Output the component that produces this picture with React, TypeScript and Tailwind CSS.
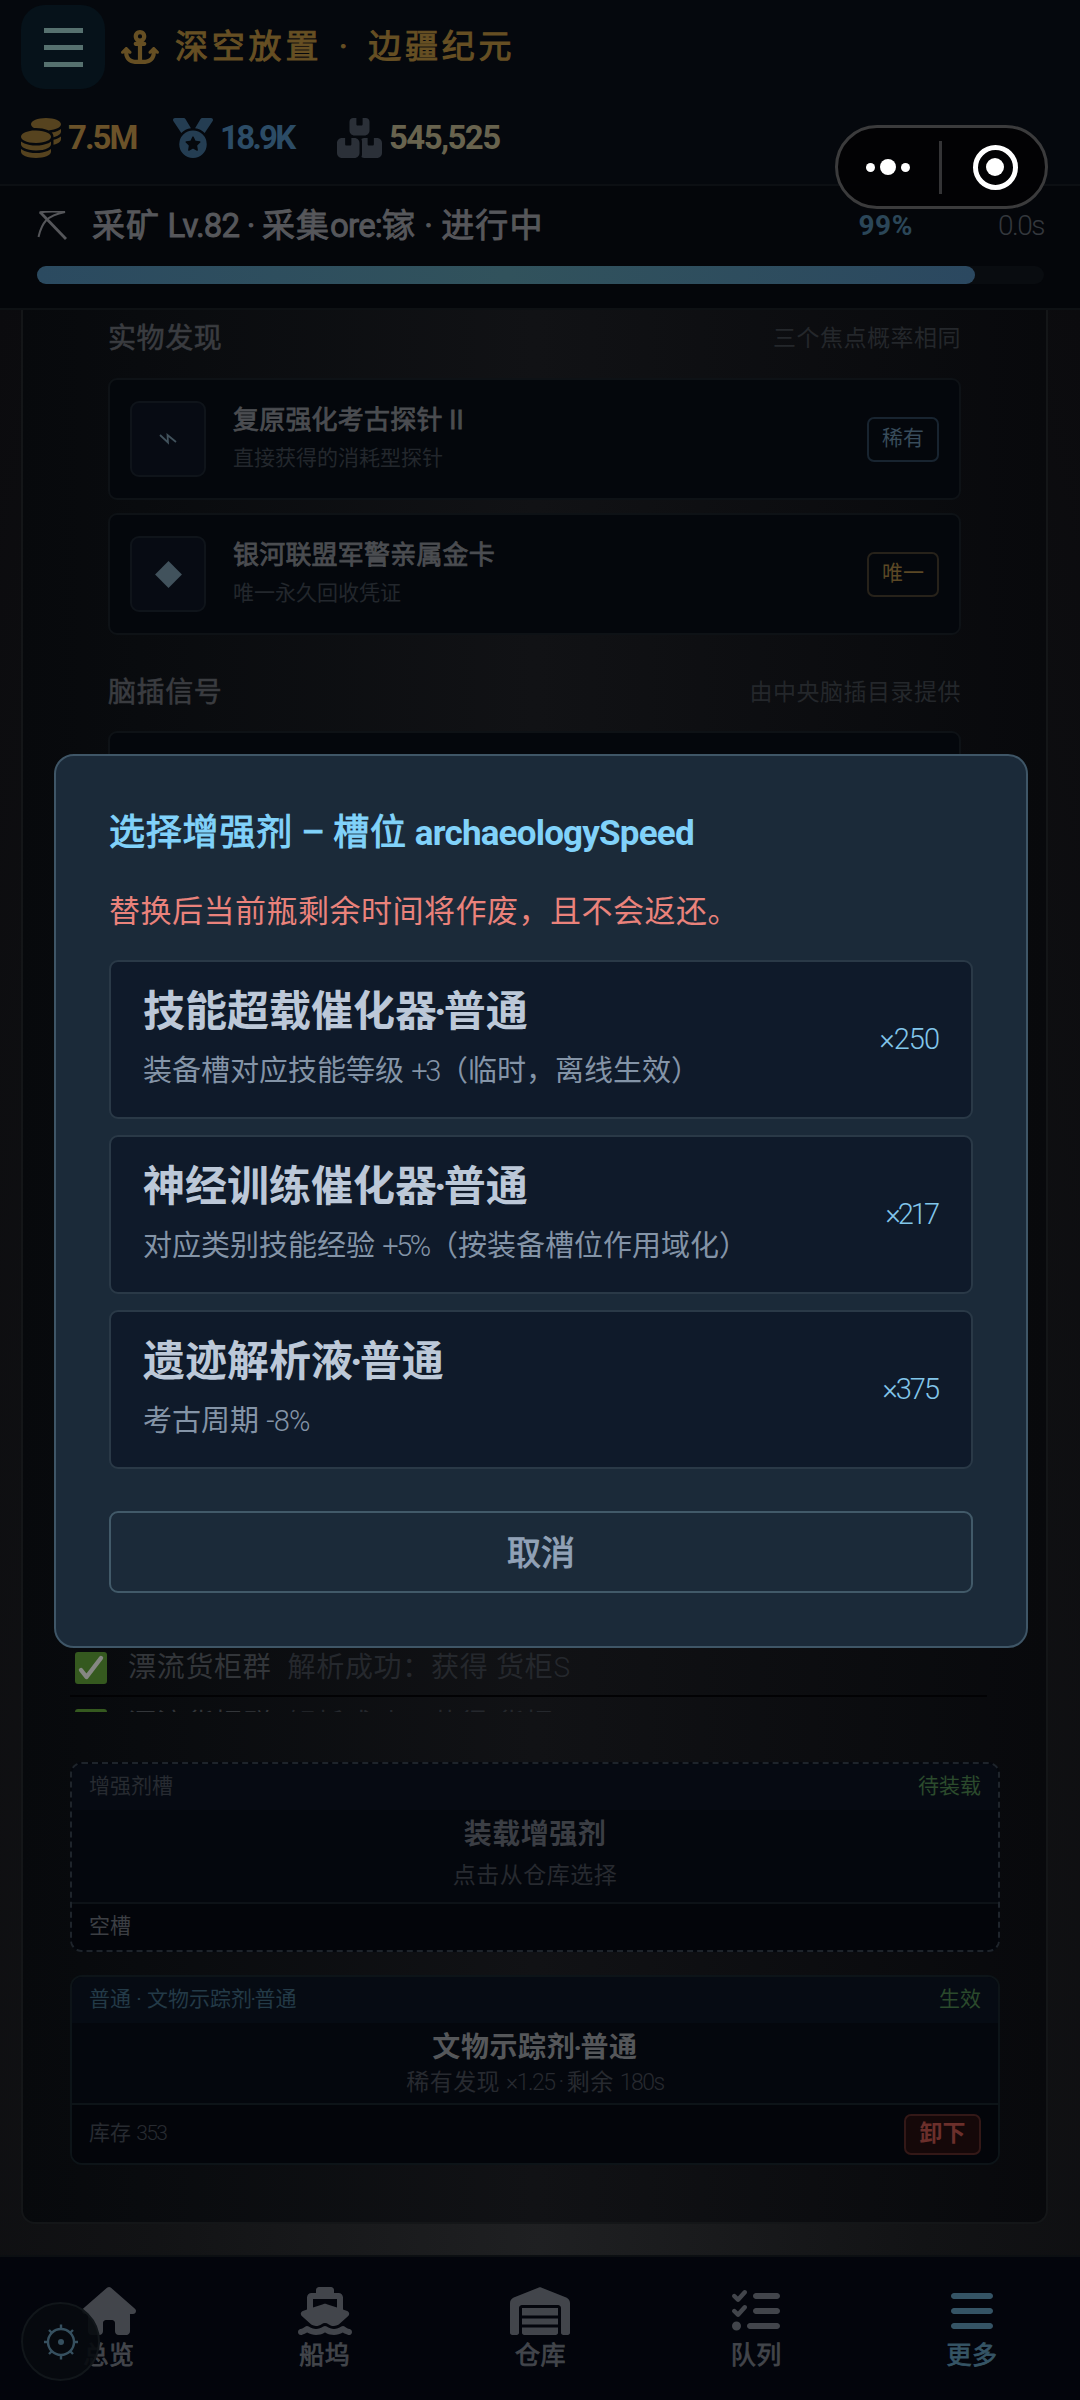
import { Fragment, type ReactNode } from "react";
import {
  FaAnchor,
  FaBars,
  FaBoxesStacked,
  FaCoins,
  FaHouse,
  FaListCheck,
  FaMedal,
  FaShip,
  FaWarehouse,
} from "react-icons/fa6";

const boosters = [
  {
    name: "技能超载催化器·普通",
    before: "装备槽对应技能等级 ",
    value: "+3",
    after: "（临时，离线生效）",
    valueClass: "tracking-[-2.4px]",
    count: "×250",
    countClass: "tracking-[-1px]",
  },
  {
    name: "神经训练催化器·普通",
    before: "对应类别技能经验 ",
    value: "+5%",
    after: "（按装备槽位作用域化）",
    valueClass: "tracking-[-2.4px]",
    count: "×217",
    countClass: "tracking-[-3px] pr-[2px]",
  },
  {
    name: "遗迹解析液·普通",
    before: "考古周期 ",
    value: "-8%",
    after: "",
    valueClass: "tracking-[-0.8px]",
    count: "×375",
    countClass: "tracking-[-2px] pr-px",
  },
];

const tabs = [
  { label: "总览", icon: <FaHouse className="h-12 w-[54px]" /> },
  { label: "船坞", icon: <FaShip className="h-12 w-[54px]" /> },
  { label: "仓库", icon: <FaWarehouse className="h-12 w-[60px]" /> },
  { label: "队列", icon: <FaListCheck className="h-12 w-12" /> },
  { label: "更多", icon: <FaBars className="h-12 w-[42px]" />, active: true },
];

function Pickaxe() {
  return (
    <svg viewBox="0 0 30 30" className="h-[30px] w-[30px]" fill="none" stroke="#55565a">
      <path d="M3 1 29 28" strokeWidth="2.8" />
      <path d="M2.500 1.500C12-.5 20 .5 28 1 20 2.500 14 4.500 9 9.500 4 15 3 20 1.500 26" strokeWidth="2" />
    </svg>
  );
}

function Probe() {
  return (
    <svg viewBox="0 0 18 12" className="h-3 w-[18px]" fill="none" stroke="#41525c" strokeWidth="1.8">
      <path d="M1 2 9 9.500 8.500 2 17 9" />
    </svg>
  );
}

function Check() {
  return (
    <svg viewBox="0 0 32 32" className="h-8 w-8 shrink-0">
      <rect width="32" height="32" rx="3" fill="#35591f" />
      <path
        d="M6 18 11.500 25 26 6"
        fill="none"
        stroke="#858783"
        strokeWidth="4.4"
        strokeLinecap="round"
        strokeLinejoin="round"
      />
    </svg>
  );
}

// Item names use a tight middle dot
function Name({ text }: { text: string }) {
  return (
    <>
      {text.split("·").map((part, i) => (
        <Fragment key={part}>
          {i > 0 && <span className="-mx-[0.07em]">·</span>}
          {part}
        </Fragment>
      ))}
    </>
  );
}

function SectionHead({ title, note }: { title: string; note: string }) {
  return (
    <div className="flex h-10 items-center justify-between">
      <h3 className="text-[28px] leading-10 tracking-[0.6px] text-[#3a3c40] [-webkit-text-stroke:0.6px]">{title}</h3>
      <span className="text-[23px] leading-10 tracking-[0.5px] text-[#24272b]">{note}</span>
    </div>
  );
}

function FindCard({
  icon,
  name,
  desc,
  badge,
  gold,
}: {
  icon: ReactNode;
  name: string;
  desc: string;
  badge: string;
  gold?: boolean;
}) {
  return (
    <div className="flex h-[122px] items-center rounded-[9px] border-2 border-[#0e1216] bg-[#04070c] px-5">
      <div className="flex h-[76px] w-[76px] items-center justify-center rounded-[9px] border-2 border-[#0f141a] bg-[#070b13]">
        {icon}
      </div>
      <div className="-mt-[2px] ml-[27px] flex-1">
        <div className="text-[26px] leading-9 tracking-[0.2px] text-[#4b4d51] [-webkit-text-stroke:0.8px]">{name}</div>
        <div className="mt-1 text-[21px] leading-8 text-[#23272d]">{desc}</div>
      </div>
      <div
        className={
          gold
            ? "flex h-[45px] w-[72px] items-center justify-center rounded-[7px] border-2 border-[#27221a] text-[21px] text-[#5b4825]"
            : "flex h-[45px] w-[72px] items-center justify-center rounded-[7px] border-2 border-[#182430] text-[21px] text-[#384c5b]"
        }
      >
        {badge}
      </div>
    </div>
  );
}

function LogRow() {
  return (
    <div className="flex h-[57px] shrink-0 items-center border-b-2 border-[#020204] pl-[5px] text-[28px] leading-10 tracking-[0.7px]">
      <Check />
      <span className="ml-[21px] text-[#33363a]">漂流货柜群</span>
      <span className="ml-4 text-[#25282d]">
        解析成功：获得 货柜<span className="font-light">S</span>
      </span>
    </div>
  );
}

export default function App() {
  return (
    <div className="relative flex h-[2400px] w-[1080px] flex-col overflow-hidden bg-[#04060b] font-['Roboto','Noto_Sans_CJK_SC',sans-serif]">
      {/* Top bar */}
      <header className="h-[310px] shrink-0 border-b-2 border-[#0e1114] bg-[#04060a]">
        <div className="h-[186px] border-b-2 border-[#0c0f13] bg-[#05080d] px-[21px] pt-[5px]">
          <div className="flex h-[84px] items-center">
            <div className="flex h-[84px] w-[84px] flex-col items-center justify-center gap-3 rounded-3xl bg-[#06121a]">
              <div className="h-[5px] w-[39px] bg-[#56716f]" />
              <div className="h-[5px] w-[39px] bg-[#56716f]" />
              <div className="h-[5px] w-[39px] bg-[#56716f]" />
            </div>
            <FaAnchor className="ml-4 h-[34px] w-[38px] text-[#664f23]" />
            <h1 className="ml-4 flex text-[33px] leading-[48px] tracking-[3.8px] text-[#664f23] [-webkit-text-stroke:1px]">
              <span>深空放置</span>
              <span className="w-[46px] text-center">·</span>
              <span>边疆纪元</span>
            </h1>
          </div>
          <div className="mt-[29px] flex h-10 items-center text-[33px] font-bold leading-10">
            <FaCoins className="h-10 w-10 text-[#56431f]" />
            <span className="ml-[7px] w-[105px] tracking-[-2px] text-[#6b5229]">7.5M</span>
            <FaMedal className="h-10 w-10 text-[#243d52]" />
            <span className="ml-[7px] w-[117px] tracking-[-2.8px] text-[#2c4c66]">18.9K</span>
            <FaBoxesStacked className="h-10 w-[45px] text-[#2b3038]" />
            <span className="ml-[7px] tracking-[-1.6px] text-[#68634e]">545,525</span>
          </div>
        </div>

        <div className="flex h-[80px] items-center pl-[37px] pr-9">
          <Pickaxe />
          <span className="ml-[25px] flex-1 text-[33px] leading-[44px] tracking-[1.1px] text-[#56575b] [-webkit-text-stroke:0.9px]">
            采矿<span className="tracking-[-0.8px]"> Lv.82 · </span>采集
            <span className="tracking-[-0.8px]">ore:</span>镓<span className="tracking-[0px]"> · </span>进行中
          </span>
          <span className="mr-[85px] text-[28px] font-bold tracking-[0.6px] text-[#2b4658]">99%</span>
          <span className="text-[28px] font-light tracking-[-1.5px] text-[#34383d]">0.0s</span>
        </div>
        <div className="ml-[37px] mr-9 h-[18px] rounded-full bg-[#090c10]">
          <div className="h-full w-[938px] rounded-full bg-linear-to-r from-[#2b4a60] via-[#31525c] to-[#2b4860]" />
        </div>
      </header>

      {/* Page */}
      <main className="flex-1 overflow-hidden bg-radial-[at_50%_100%] from-[#1f2022] via-[#121315] to-[#0b0b0e] pl-[21px] pr-8">
        <div className="flex h-[1914px] flex-col rounded-b-[14px] border-2 border-t-0 border-[#141618] bg-linear-to-r from-[#07090c] via-[#111215] to-[#08090c]">
          <div className="h-[1337px] pl-[85px] pr-[85px] pt-[9px]">
            <SectionHead title="实物发现" note="三个焦点概率相同" />
            <div className="mt-[19px] flex flex-col gap-[13px]">
              <FindCard icon={<Probe />} name="复原强化考古探针 II" desc="直接获得的消耗型探针" badge="稀有" />
              <FindCard
                icon={<div className="h-[19px] w-[19px] rotate-45 bg-[#41525c]" />}
                name="银河联盟军警亲属金卡"
                desc="唯一永久回收凭证"
                badge="唯一"
                gold
              />
            </div>
            <div className="mt-[38px]">
              <SectionHead title="脑插信号" note="由中央脑插目录提供" />
            </div>
            <div className="mt-[18px] h-[122px] rounded-[9px] border-2 border-[#0e1216] bg-[#04070c]" />
          </div>

          {/* Scan log, the last row is cut by the scroll box */}
          <div className="ml-[47px] mr-[59px] flex h-[65px] flex-col overflow-hidden">
            <div className="-mt-[7px]">
              <LogRow />
              <LogRow />
            </div>
          </div>

          <div className="ml-[47px] mr-[46px] mt-[50px] h-[190px] overflow-hidden rounded-xl border-2 border-dashed border-[#1e242b] bg-[#04070d]">
            <div className="flex h-[46px] items-center justify-between bg-[#060a12] px-[17px] text-[21px]">
              <span className="text-[#272b31]">增强剂槽</span>
              <span className="text-[#2b4a2c]">待装载</span>
            </div>
            <div className="flex h-[94px] flex-col items-center border-b-2 border-[#0d1217]">
              <div className="mt-[5px] text-[28px] font-bold leading-10 tracking-[0.5px] text-[#3b3e44]">装载增强剂</div>
              <div className="mt-[5px] text-[23px] leading-8 tracking-[0.5px] text-[#272a30]">点击从仓库选择</div>
            </div>
            <div className="flex h-[46px] items-center bg-[#03050a] px-[17px] text-[21px] text-[#3c3f44]">空槽</div>
          </div>

          <div className="ml-[47px] mr-[46px] mt-[23px] h-[190px] overflow-hidden rounded-xl border-2 border-[#0d1418] bg-[#04070d]">
            <div className="flex h-[46px] items-center justify-between bg-[#060b13] px-[17px] text-[21px]">
              <span className="text-[#233a47]">
                普通 · <Name text="文物示踪剂·普通" />
              </span>
              <span className="text-[#2b4a2c]">生效</span>
            </div>
            <div className="flex h-[82px] flex-col items-center border-b-2 border-[#0d1418]">
              <div className="mt-[5px] text-[28px] font-bold leading-10 tracking-[0.6px] text-[#55575a]">
                <Name text="文物示踪剂·普通" />
              </div>
              <div className="-mt-px text-[23px] leading-8 tracking-[0.4px] text-[#272a30]">
                稀有发现 <span className="font-light tracking-[-1.5px]">×1.25 · </span>剩余{" "}
                <span className="font-light tracking-[-1.5px]">180s</span>
              </div>
            </div>
            <div className="flex h-[58px] items-center justify-between bg-[#03050a] pl-[17px] pr-[17px] text-[21px] text-[#272b31]">
              <span>
                库存 <span className="font-light tracking-[-1.6px]">353</span>
              </span>
              <span className="flex h-[41px] w-[77px] items-center justify-center rounded-[7px] border-2 border-[#331817] bg-[#150809] text-[23px] font-bold text-[#6b2f2b]">
                卸下
              </span>
            </div>
          </div>
        </div>
      </main>

      {/* Bottom tabs */}
      <nav className="grid h-[145px] shrink-0 grid-cols-5 border-t-2 border-[#0c0f12] bg-[#03050c] pl-px">
        {tabs.map((tab) => (
          <div
            key={tab.label}
            className={
              tab.active
                ? "flex flex-col items-center pt-[30px] text-[#355465]"
                : "flex flex-col items-center pt-[30px] text-[#42454b]"
            }
          >
            {tab.icon}
            <span className="mt-[3px] text-[25px] leading-9 tracking-[0.5px] [-webkit-text-stroke:0.8px]">{tab.label}</span>
          </div>
        ))}
      </nav>

      {/* Floating helm button */}
      <div className="absolute bottom-[19px] left-[21px] flex h-[79px] w-[79px] items-center justify-center rounded-full border-2 border-[#11161a] bg-[#070a0e]/90">
        <svg viewBox="-18 -18 36 36" className="h-9 w-9" fill="none" stroke="#36505f" strokeWidth="2.4">
          <circle r="13" />
          <circle r="3" fill="#36505f" stroke="none" />
          <path d="M0-13V-17.500M0 13V17.500M-13 0H-17M13 0H17M-9-9-12-12M9-9 12-12M-9 9-12 12M9 9 12 12" />
        </svg>
      </div>

      {/* Booster picker */}
      <div className="absolute left-[54px] top-[754px] h-[894px] w-[974px] rounded-[20px] border-2 border-[#3f5667] bg-[#1b2a39] px-[53px] pt-[51px]">
        <h2 className="whitespace-nowrap text-[36px] leading-[52px] tracking-[0.8px] text-[#81d2fa] [-webkit-text-stroke:1px]">
          选择增强剂<span className="tracking-[-0.4px]"> – </span>槽位
          <span className="text-[35px] font-bold tracking-[-0.8px] [-webkit-text-stroke:0]"> archaeologySpeed</span>
        </h2>
        <p className="mt-[30px] text-[31px] leading-[44px] tracking-[0.5px] text-[#ea827b]">
          替换后当前瓶剩余时间将作废，且不会返还。
        </p>
        <div className="mt-[26px] flex flex-col gap-4">
          {boosters.map((b) => (
            <div
              key={b.name}
              className="flex h-[159px] items-center justify-between rounded-[9px] border-2 border-[#2a3947] bg-[#0f1a2a] px-8"
            >
              <div className="-mt-[4px]">
                <div className="text-[42px] font-bold leading-[56px] text-[#bcc8d8]">
                  <Name text={b.name} />
                </div>
                <div className="mt-[11px] text-[29px] leading-10 text-[#8494a7]">
                  {b.before}
                  <span className={`font-light ${b.valueClass}`}>{b.value}</span>
                  {b.after}
                </div>
              </div>
              <span className={`text-[29px] font-light text-[#82c6ea] ${b.countClass}`}>{b.count}</span>
            </div>
          ))}
        </div>
        <button className="mt-[42px] block h-[82px] w-full rounded-[9px] border-2 border-[#425a69] pt-[3px] text-[34px] leading-[75px] text-[#91a1b6] [-webkit-text-stroke:1px]">
          取消
        </button>
      </div>

      {/* Host app capsule */}
      <div className="absolute left-[835px] top-[125px] flex h-[84px] w-[213px] items-center rounded-full border-[3px] border-[#3b3b3c] bg-[#020204]/95">
        <div className="flex w-[101px] items-center justify-center gap-[5px] pr-px">
          <div className="h-[9px] w-[9px] rounded-full bg-white" />
          <div className="h-4 w-4 rounded-full bg-white" />
          <div className="h-[9px] w-[9px] rounded-full bg-white" />
        </div>
        <div className="h-[53px] w-[3px] bg-[#343436]" />
        <div className="flex flex-1 items-center justify-center pl-[3px]">
          <div className="flex h-[45px] w-[45px] items-center justify-center rounded-full border-[5px] border-white">
            <div className="h-[18px] w-[18px] rounded-full bg-white" />
          </div>
        </div>
      </div>
    </div>
  );
}
